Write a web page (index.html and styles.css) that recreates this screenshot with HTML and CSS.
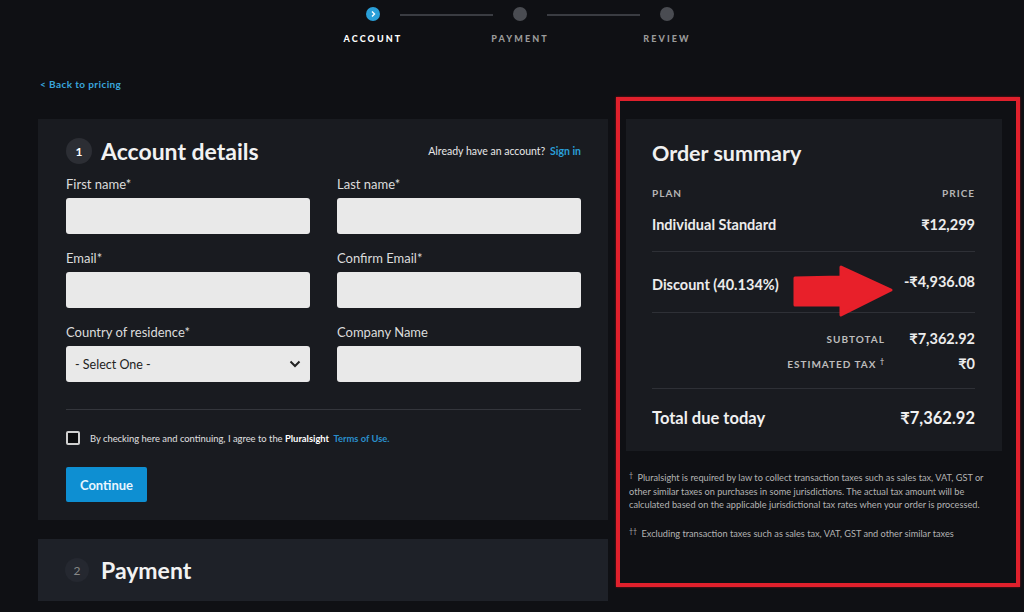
FILE: index.html
```html
<!DOCTYPE html>
<html lang="en">

<head>
  <meta charset="UTF-8">
  <meta name="viewport" content="width=device-width, initial-scale=1.0">
  <title>Checkout - Account</title>
  <link rel="stylesheet" href="styles.css">
</head>

<body>
  <div class="stepper">
    <div class="step active">
      <span class="dot">
        <svg width="8" height="8" viewBox="0 0 8 8"><path d="M3 1.5 L5.5 4 L3 6.5" fill="none" stroke="#fff" stroke-width="1.4"/></svg>
      </span>
      <span class="step-label">ACCOUNT</span>
    </div>
    <div class="step">
      <span class="dot"></span>
      <span class="step-label">PAYMENT</span>
    </div>
    <div class="step last">
      <span class="dot"></span>
      <span class="step-label">REVIEW</span>
    </div>
  </div>

  <a class="back" href="#">&lt; Back to pricing</a>

  <div class="checkout">
    <div class="left">
      <div class="card account">
        <div class="card-head">
          <span class="num">1</span>
          <h2>Account details</h2>
          <div class="signin">Already have an account? <a href="#">Sign in</a></div>
        </div>

        <div class="form-grid">
          <div class="field">
            <label>First name*</label>
            <div class="input"></div>
          </div>
          <div class="field">
            <label>Last name*</label>
            <div class="input"></div>
          </div>
          <div class="field">
            <label>Email*</label>
            <div class="input"></div>
          </div>
          <div class="field">
            <label>Confirm Email*</label>
            <div class="input"></div>
          </div>
          <div class="field">
            <label>Country of residence*</label>
            <div class="input select">
              <span>- Select One -</span>
              <svg width="12" height="8" viewBox="0 0 12 8"><path d="M1.5 1.5 L6 6 L10.5 1.5" fill="none" stroke="#222" stroke-width="2"/></svg>
            </div>
          </div>
          <div class="field">
            <label>Company Name</label>
            <div class="input"></div>
          </div>
        </div>

        <hr class="divider">

        <div class="terms">
          <span class="checkbox"></span>
          <span>By checking here and continuing, I agree to the <b>Pluralsight</b> <a href="#">Terms of Use.</a></span>
        </div>

        <button class="btn">Continue</button>
      </div>

      <div class="card payment">
        <span class="num dim">2</span>
        <h2>Payment</h2>
      </div>
    </div>

    <div class="right">
      <div class="summary">
        <h3>Order summary</h3>
        <div class="row heads">
          <span>PLAN</span>
          <span>PRICE</span>
        </div>
        <div class="row item">
          <span>Individual Standard</span>
          <span>₹12,299</span>
        </div>
        <div class="row item discount">
          <span>Discount (40.134%)</span>
          <span>-₹4,936.08</span>
        </div>
        <div class="totals">
          <div class="trow"><span class="tl">SUBTOTAL</span><span class="tv">₹7,362.92</span></div>
          <div class="trow"><span class="tl">ESTIMATED TAX <sup>†</sup></span><span class="tv">₹0</span></div>
        </div>
        <div class="row total">
          <span>Total due today</span>
          <span>₹7,362.92</span>
        </div>

        <svg class="arrow" width="104" height="56" viewBox="0 0 104 56">
          <path d="M3 14 L49 13 L49 3 L99 26 L49 51 L49 41 L3 41 Z" fill="#e8202a" stroke="#e8202a" stroke-width="3" stroke-linejoin="round"/>
        </svg>
      </div>

      <div class="notes">
        <p><span class="mark">†</span> Pluralsight is required by law to collect transaction taxes such as sales tax, VAT, GST or other similar taxes on purchases in some jurisdictions. The actual tax amount will be calculated based on the applicable jurisdictional tax rates when your order is processed.</p>
        <p><span class="mark">††</span> Excluding transaction taxes such as sales tax, VAT, GST and other similar taxes</p>
      </div>
    </div>
  </div>
</body>

</html>
```

FILE: styles.css
```css
body {
  margin: 0;
  padding: 0;
  background-color: #0f1014;
  color: #eee;
  font-family: Lato, "Liberation Sans", sans-serif;
  height: 612px;
  overflow: hidden;
}

/* stepper */
.stepper {
  display: flex;
  justify-content: center;
  padding: 7px 0 0 16px;
}

.step {
  position: relative;
  width: 147px;
  display: flex;
  flex-direction: column;
  align-items: center;
}

.step::after {
  content: "";
  position: absolute;
  top: 7px;
  left: calc(50% + 27px);
  width: 93px;
  height: 2px;
  background-color: #3a3c42;
}

.step.last::after {
  display: none;
}

.dot {
  width: 14px;
  height: 14px;
  border-radius: 50%;
  background-color: #4a4c52;
  display: flex;
  align-items: center;
  justify-content: center;
}

.step.active .dot {
  background-color: #2a9fd8;
}

.step-label {
  margin-top: 12px;
  font-size: 9px;
  font-weight: 900;
  letter-spacing: 2.1px;
  color: #9a9a9a;
}

.step.active .step-label {
  color: #fff;
}

.back {
  display: block;
  margin: 34px 0 0 40px;
  font-size: 10px;
  font-weight: 700;
  letter-spacing: 0.4px;
  color: #3aa6dc;
  text-decoration: none;
}

/* layout */
.checkout {
  display: grid;
  grid-template-columns: 570px 404px;
  column-gap: 8px;
  margin: 7px 0 0 38px;
}

.card {
  background-color: #191b20;
}

.account {
  padding: 18px 27px 18px 28px;
  margin-top: 22px;
}

.card-head {
  display: flex;
  align-items: center;
}

.num {
  width: 26px;
  height: 26px;
  border-radius: 50%;
  background-color: #2c2e34;
  display: flex;
  align-items: center;
  justify-content: center;
  font-size: 12px;
  font-weight: 700;
  color: #fff;
  margin-right: 9px;
}

.card-head h2,
.payment h2 {
  margin: 0;
  font-size: 23px;
  font-weight: 700;
  color: #f2f2f2;
}

.signin {
  margin-left: auto;
  font-size: 10.5px;
  color: #e8e8e8;
}

.signin a {
  color: #2a9fd8;
  font-weight: 700;
  margin-left: 2px;
  text-decoration: none;
}

.form-grid {
  display: grid;
  grid-template-columns: 244px 244px;
  column-gap: 27px;
  row-gap: 16px;
  margin-top: 11px;
}

.field label {
  display: block;
  font-size: 13px;
  color: #dcdcdc;
  line-height: 16px;
  margin-bottom: 6px;
}

.input {
  height: 36px;
  background-color: #e9e9e9;
  border-radius: 3px;
}

.select {
  display: flex;
  align-items: center;
  justify-content: space-between;
  padding: 0 9px 0 9px;
  font-size: 12.5px;
  color: #222;
}

.divider {
  border: none;
  height: 1px;
  background-color: #34363c;
  margin: 27px 0 0;
}

.terms {
  display: flex;
  align-items: center;
  margin-top: 21px;
  font-size: 9.4px;
  color: #e0e0e0;
}

.terms b {
  color: #fff;
}

.terms a {
  color: #2a8fcc;
  font-weight: 700;
  text-decoration: none;
  margin-left: 2px;
}

.checkbox {
  width: 10px;
  height: 10px;
  border: 2px solid #cfcfcf;
  border-radius: 2px;
  background-color: #0b0c0e;
  margin-right: 10px;
}

.btn {
  display: block;
  margin-top: 22px;
  width: 81px;
  height: 35px;
  border: none;
  border-radius: 2px;
  background-color: #0e8fd2;
  color: #e8f6ff;
  font-family: inherit;
  font-size: 13px;
  font-weight: 700;
}

.payment {
  margin-top: 19px;
  height: 62px;
  background-color: #1e2128;
  display: flex;
  align-items: center;
  padding-left: 27px;
}

.num.dim {
  width: 24px;
  height: 24px;
  background-color: #252830;
  color: #888;
  font-weight: 400;
  margin-right: 12px;
}

/* summary */
.right {
  border: 4px solid #e0202c;
  padding: 18px 14px 0 6px;
  height: 490px;
  box-sizing: border-box;
  box-shadow: 0 0 2px #8a1016;
}

.summary {
  position: relative;
  background-color: #191b20;
  padding: 21px 27px 23px 26px;
}

.summary h3 {
  margin: 0 0 21px;
  font-size: 21.5px;
  font-weight: 700;
  color: #f0f0f0;
}

.row {
  display: flex;
  justify-content: space-between;
}

.heads {
  font-size: 10px;
  font-weight: 700;
  letter-spacing: 1px;
  color: #b5b5b5;
}

.item {
  font-size: 14.5px;
  font-weight: 700;
  color: #ececec;
  padding: 17px 0 18px;
}

.discount {
  border-top: 1px solid #2e3036;
  border-bottom: 1px solid #2e3036;
  padding: 24px 0 19px;
  font-size: 14.5px;
}

.discount span:last-child {
  margin-top: -3px;
}

.totals {
  padding: 13px 0 12px;
  border-bottom: 1px solid #2e3036;
}

.trow {
  display: flex;
  justify-content: flex-end;
  align-items: center;
  height: 25px;
}

.tl {
  font-size: 10px;
  font-weight: 700;
  letter-spacing: 1px;
  color: #bdbdbd;
  margin-right: 24px;
}

.tl sup {
  font-size: 7px;
}

.tv {
  font-size: 14.5px;
  font-weight: 700;
  color: #ececec;
  min-width: 66px;
  text-align: right;
}

.total {
  font-size: 16.5px;
  font-weight: 700;
  color: #f0f0f0;
  padding-top: 19px;
}

.arrow {
  position: absolute;
  left: 166px;
  top: 145px;
}

.notes {
  padding: 20px 12px 0 3px;
  font-size: 9.2px;
  line-height: 13.5px;
  color: #b3b3b3;
}

.notes p {
  margin: 0 0 15px;
}

.mark {
  font-size: 7px;
  vertical-align: 3px;
  line-height: 1;
  margin-right: 2px;
}
```
